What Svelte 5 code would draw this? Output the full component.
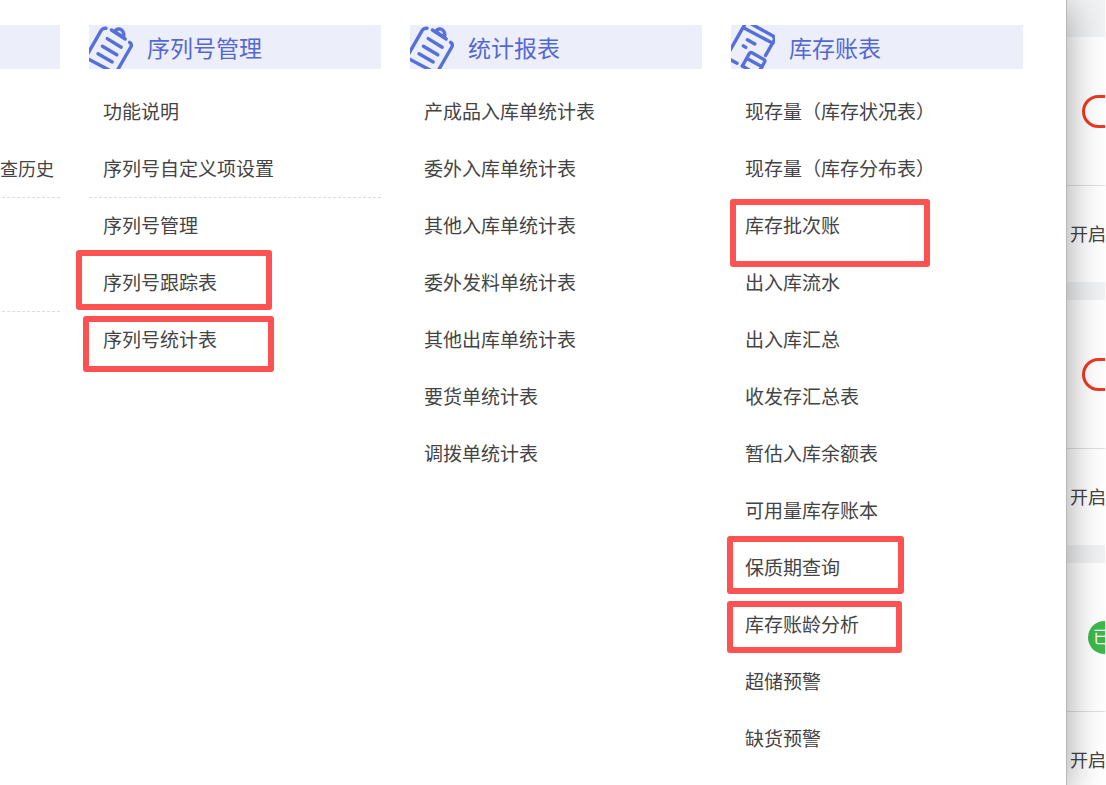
<script lang="ts">
	type Mark = { x: number; y: number; w: number; h: number };
	type Item = { label: string; divider?: boolean; mark?: Mark };
	type Column = { title: string; icon: 'clipboard' | 'ledger'; items: Item[] };

	const columns: Column[] = [
		{
			title: '序列号管理',
			icon: 'clipboard',
			items: [
				{ label: '功能说明' },
				{ label: '序列号自定义项设置', divider: true },
				{ label: '序列号管理' },
				{ label: '序列号跟踪表', mark: { x: -13, y: -5, w: 196, h: 60 } },
				{ label: '序列号统计表', mark: { x: -6, y: 4, w: 191, h: 56 } }
			]
		},
		{
			title: '统计报表',
			icon: 'clipboard',
			items: [
				{ label: '产成品入库单统计表' },
				{ label: '委外入库单统计表' },
				{ label: '其他入库单统计表' },
				{ label: '委外发料单统计表' },
				{ label: '其他出库单统计表' },
				{ label: '要货单统计表' },
				{ label: '调拨单统计表' }
			]
		},
		{
			title: '库存账表',
			icon: 'ledger',
			items: [
				{ label: '现存量（库存状况表）' },
				{ label: '现存量（库存分布表）' },
				{ label: '库存批次账', mark: { x: -1, y: 1, w: 200, h: 68 } },
				{ label: '出入库流水' },
				{ label: '出入库汇总' },
				{ label: '收发存汇总表' },
				{ label: '暂估入库余额表' },
				{ label: '可用量库存账本' },
				{ label: '保质期查询', mark: { x: -4, y: -4, w: 177, h: 58 } },
				{ label: '库存账龄分析', mark: { x: -4, y: 4, w: 175, h: 52 } },
				{ label: '超储预警' },
				{ label: '缺货预警' }
			]
		}
	];

	const cards = [{ on: false }, { on: false }, { on: true }];
</script>

<div class="page">
	<nav class="panel">
		<section class="column">
			<h2 class="heading"></h2>
			<ul class="list">
				<li class="item"></li>
				<li class="item divider tail"><a href="#history">查历史</a></li>
				<li class="item"></li>
				<li class="item divider"></li>
			</ul>
		</section>

		{#each columns as column}
			<section class="column">
				<h2 class="heading">
					{#if column.icon === 'clipboard'}
						<svg class="icon" viewBox="0 0 44 44" aria-hidden="true">
							<path d="M-1 28.5 12.2 5.4Q13.8 3 17 3.2" />
							<path d="M-1 33.8 20 45M28.6 45 41.8 22Q43.4 19.2 40.6 17.4" />
							<path d="M22.4 5 36.2 14" />
							<path
								class="solid"
								d="M24 6.4C26.6 1.2 32.4 1.6 35 5.6 36.8 8.4 36.4 11.6 35.4 14ZM28 6.6 33.2 9.8C33.4 5.6 29.6 4.2 28 6.6Z"
							/>
							<path d="M18.2 13.6 32.2 22.2M13.4 21.2 27.8 29.8M9 28.8 23.2 37" />
						</svg>
					{:else}
						<svg class="icon" viewBox="0 0 44 44" aria-hidden="true">
							<path d="M-1 25.5 14-1" />
							<path d="M20.4-1 41.6 10.8Q44.4 12.6 43 15.6L34.6 30.4" />
							<path d="M13 3 41.8 18.2" />
							<path d="M16.4 14.8 23.8 19M12.4 20.8 14.8 22.4M-1 34.4 6 38.2" />
							<path d="M11.4 41 18.4 28.4Q19.4 27 21 27.8L33 34.6Q34.4 35.4 33.6 37L29 45" />
							<path d="M16 33.4 31 41.8M11.4 41 18 45" />
						</svg>
					{/if}
					<span>{column.title}</span>
				</h2>
				<ul class="list">
					{#each column.items as item}
						<li class="item" class:divider={item.divider}>
							<a href="#{item.label}">{item.label}</a>
							{#if item.mark}
								<span
									class="mark"
									style="left: {item.mark.x}px; top: {item.mark.y}px; width: {item.mark.w}px; height: {item.mark.h}px"
								></span>
							{/if}
						</li>
					{/each}
				</ul>
			</section>
		{/each}
	</nav>

	<aside class="cards">
		{#each cards as card}
			<article class="card">
				<div class="card-top">
					<span class="badge" class:on={card.on}>{card.on ? '已' : ''}</span>
				</div>
				<div class="card-bottom"><a href="#open">开启</a></div>
			</article>
		{/each}
	</aside>
</div>

<style>
	:global(body) {
		margin: 0;
		background: #ffffff;
	}

	.page {
		display: flex;
		height: 100vh;
		overflow: hidden;
		font-family: 'Noto Sans CJK SC', sans-serif;
		color: #444444;
	}

	.page a {
		color: inherit;
		text-decoration: none;
		white-space: nowrap;
	}

	.panel {
		position: relative;
		z-index: 1;
		flex: 1;
		min-width: 0;
		box-sizing: border-box;
		display: grid;
		grid-template-columns: repeat(4, 292px);
		justify-content: end;
		gap: 29px;
		padding: 25px 43px 0 0;
		background: #ffffff;
		border-right: 1px solid #b9b9b9;
		box-shadow: 0 8px 36px rgba(0, 0, 0, 0.38);
	}

	.heading {
		display: flex;
		align-items: center;
		gap: 14px;
		height: 44px;
		margin: 0;
		background: #eceefa;
		color: #5468d4;
		font-size: 23px;
		font-weight: 400;
		line-height: 44px;
	}

	.icon {
		width: 44px;
		height: 44px;
		overflow: hidden;
		fill: none;
		stroke: #5570d8;
		stroke-width: 3.4;
		stroke-linecap: round;
		stroke-linejoin: round;
	}

	.icon .solid {
		fill: #5570d8;
		fill-rule: evenodd;
		stroke-width: 0.6;
	}

	.list {
		margin: 0;
		padding: 15px 0 0;
		list-style: none;
	}

	.item {
		position: relative;
		box-sizing: border-box;
		height: 57px;
		padding-left: 14px;
		font-size: 19px;
		line-height: 54px;
	}

	.item.divider {
		border-bottom: 1px dashed #dcdcdc;
	}

	.item.tail {
		padding-right: 6px;
		font-size: 18px;
		text-align: right;
	}

	.mark {
		position: absolute;
		z-index: 1;
		box-sizing: border-box;
		border: 6px solid #fd5252;
		border-radius: 3px;
		pointer-events: none;
	}

	.cards {
		flex: 0 0 39px;
		display: flex;
		flex-direction: column;
		gap: 18px;
		box-sizing: border-box;
		padding-top: 37px;
		border-right: 1px solid #ffffff;
		overflow: hidden;
		background: #f1f2f4;
	}

	.card {
		flex: none;
		background: #ffffff;
	}

	.card-top {
		display: flex;
		align-items: center;
		height: 148px;
		padding-left: 15px;
		border-bottom: 1px solid #dedede;
	}

	.badge {
		flex: none;
		box-sizing: border-box;
		width: 72px;
		height: 33px;
		border: 3px solid #f03820;
		border-radius: 17px;
	}

	.badge.on {
		margin-left: 6px;
		padding-left: 5px;
		border: none;
		background: #3cb94a;
		color: #ffffff;
		font-size: 17px;
		line-height: 30px;
	}

	.card-bottom {
		height: 96px;
		padding-left: 3px;
		font-size: 18px;
		line-height: 94px;
	}
</style>
